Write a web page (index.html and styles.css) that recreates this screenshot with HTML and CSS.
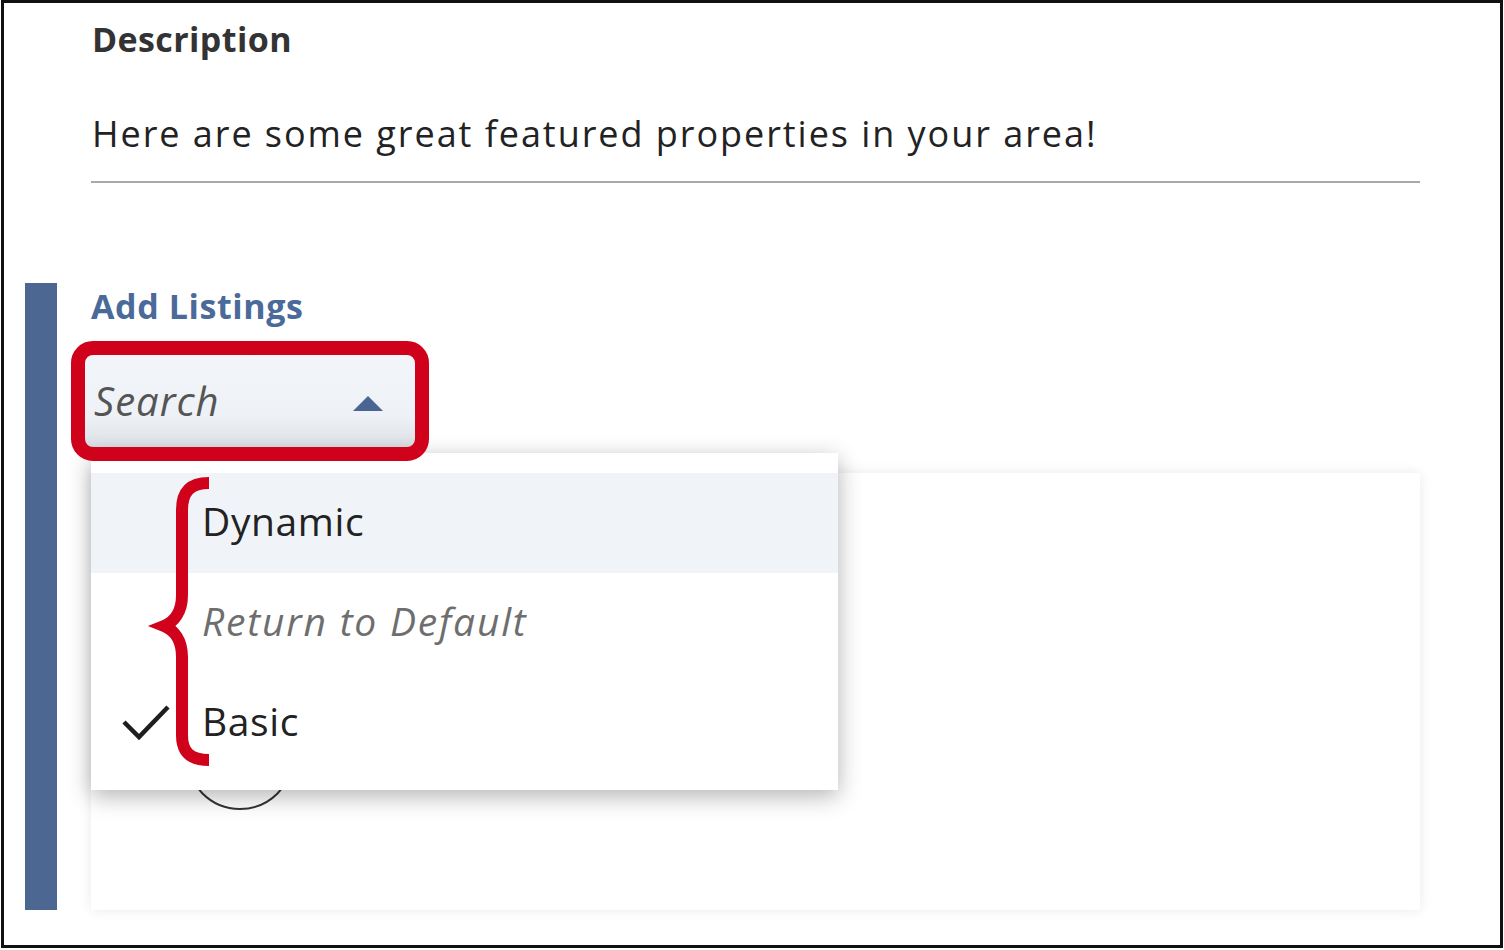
FILE: index.html
```html
<!DOCTYPE html>
<html lang="en">
<head>
<meta charset="utf-8">
<title>Add Listings</title>
<link rel="stylesheet" href="styles.css">
</head>
<body>
<div class="frame">
  <section class="description">
    <h2 class="desc-title">Description</h2>
    <p class="desc-text">Here are some great featured properties in your area!</p>
  </section>
  <hr class="divider">
  <section class="listings">
    <div class="accent-bar"></div>
    <div class="listings-col">
      <h2 class="listings-title">Add Listings</h2>
      <div class="search-box">
        <span class="search-label">Search</span>
        <svg class="caret" width="30" height="15" viewBox="0 0 30 15"><path d="M0 15 L15 0 L30 15 Z" fill="#4a6591"/></svg>
      </div>
      <div class="card">
        <div class="card-circle"></div>
      </div>

      <div class="menu">
        <div class="menu-item active"><span class="icon-slot"></span><span class="item-text">Dynamic</span></div>
        <div class="menu-item"><span class="icon-slot"></span><span class="item-text muted">Return to Default</span></div>
        <div class="menu-item"><span class="icon-slot"><svg class="check" width="50" height="38" viewBox="0 0 50 38"><path d="M3 18 L18 33 L47 3" fill="none" stroke="#1e1e1e" stroke-width="4.5"/></svg></span><span class="item-text">Basic</span></div>
      </div>

      <div class="highlight-box"></div>
      <svg class="brace" width="70" height="300" viewBox="0 0 70 300">
        <path d="M64 13 C45 13 37 22 37 40 L37 125 C37 142 29 152 19 156 C29 160 37 170 37 187 L37 265 C37 282 45 290 64 290" fill="none" stroke="#d0021b" stroke-width="12"/>
      </svg>
    </div>
  </section>
</div>
</body>
</html>
```

FILE: styles.css
```css
* { box-sizing: border-box; }

html, body {
  margin: 0;
  padding: 0;
  background: #ffffff;
}

body {
  font-family: "Open Sans", "Noto Sans", "Liberation Sans", sans-serif;
  color: #222222;
}

.frame {
  margin-left: 1px;
  width: 1502px;
  height: 948px;
  border: 3px solid #111111;
  overflow: hidden;
}

.description {
  padding: 13px 0 0 88px;
}

.desc-title {
  margin: 0;
  font-size: 34px;
  font-weight: 700;
  line-height: 46px;
  letter-spacing: 0.4px;
  color: #333333;
}

.desc-text {
  margin: 47px 0 0 0;
  font-size: 36px;
  line-height: 49px;
  letter-spacing: 1.95px;
  color: #222222;
}

.divider {
  margin: 23px 0 0 87px;
  width: 1329px;
  height: 2px;
  border: 0;
  background: #a9a9ab;
}

.listings {
  margin-top: 100px;
  display: flex;
  height: 627px;
}

.accent-bar {
  margin-left: 21px;
  width: 32px;
  background: #4c6791;
}

.listings-col {
  position: relative;
  margin-left: 34px;
  width: 1329px;
  display: flex;
  flex-direction: column;
}

.listings-title {
  margin: 0;
  font-size: 34px;
  font-weight: 700;
  line-height: 46px;
  letter-spacing: 0.6px;
  color: #4a6a9a;
}

.search-box {
  margin: 24px 0 0 -7px;
  width: 334px;
  height: 96px;
  display: flex;
  align-items: center;
  padding-left: 10px;
  padding-right: 35px;
  background: linear-gradient(#f2f5f9 0%, #eef1f5 65%, #e2e5ea 88%, #d6d9de 100%);
}

.search-label {
  font-size: 40px;
  font-style: italic;
  color: #555555;
  line-height: 54px;
  letter-spacing: 1px;
}

.caret {
  margin-left: auto;
  margin-top: 5px;
}

.card {
  position: relative;
  margin-top: 24px;
  flex: 1;
  background: #ffffff;
  box-shadow: 0 0 12px rgba(0, 0, 0, 0.09);
}

.card-circle {
  position: absolute;
  left: 95px;
  top: 229px;
  width: 108px;
  height: 108px;
  border: 2px solid #333333;
  border-radius: 50%;
}

.menu {
  position: absolute;
  left: 0;
  top: 170px;
  width: 747px;
  height: 337px;
  padding-top: 20px;
  background: #ffffff;
  box-shadow: 0 6px 22px rgba(0, 0, 0, 0.3);
  z-index: 2;
}

.menu-item {
  height: 100px;
  display: flex;
  align-items: center;
  padding-bottom: 6px;
}

.menu-item.active {
  background: #f0f3f8;
}

.icon-slot {
  width: 111px;
  display: flex;
  align-items: center;
  padding-left: 30px;
  padding-top: 6px;
}

.item-text {
  font-size: 39px;
  line-height: 53px;
  letter-spacing: 0.6px;
  color: #222222;
}

.item-text.muted {
  font-style: italic;
  letter-spacing: 1.8px;
  color: #6e6e6e;
}

.highlight-box {
  position: absolute;
  left: -20px;
  top: 58px;
  width: 358px;
  height: 120px;
  border: 14px solid #d0021b;
  border-radius: 22px;
  z-index: 3;
}

.brace {
  position: absolute;
  left: 54px;
  top: 187px;
  z-index: 3;
}
```
